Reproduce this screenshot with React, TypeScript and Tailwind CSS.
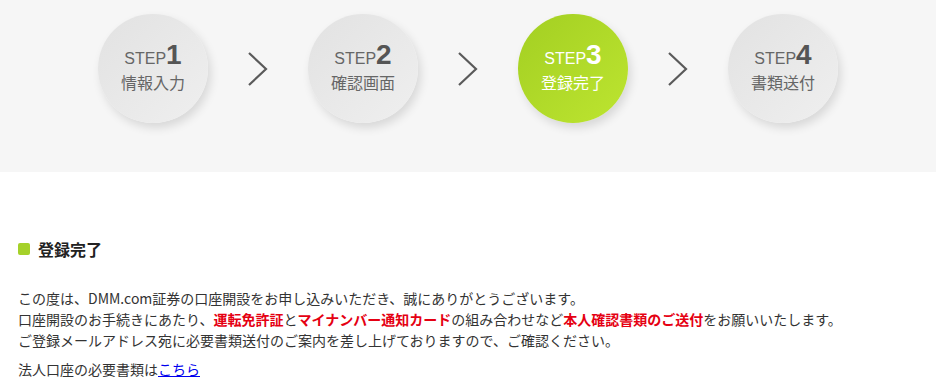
import React from "react";

const steps = [
  { no: 1, label: "情報入力" },
  { no: 2, label: "確認画面" },
  { no: 3, label: "登録完了", active: true },
  { no: 4, label: "書類送付" },
];

function Chevron() {
  return (
    <svg width="20" height="34" viewBox="0 0 20 34" className="mx-[40px] shrink-0">
      <path d="M1 1 L18 17 L1 33" fill="none" stroke="#5a5a5a" strokeWidth="2.2" />
    </svg>
  );
}

function StepCircle({ no, label, active }: { no: number; label: string; active?: boolean }) {
  return (
    <div
      className={
        active
          ? "w-[110px] h-[109px] rounded-full shrink-0 flex flex-col items-center justify-center bg-gradient-to-br from-[#a3cf22] to-[#bde530] text-white shadow-[3px_5px_10px_rgba(0,0,0,0.12)]"
          : "w-[110px] h-[109px] rounded-full shrink-0 flex flex-col items-center justify-center bg-gradient-to-br from-[#e2e2e2] to-[#efefef] text-[#666] shadow-[3px_5px_10px_rgba(0,0,0,0.12)]"
      }
    >
      <div className="flex items-baseline font-['Liberation_Sans',Arial,sans-serif] leading-none -mt-[6px]">
        <span className="text-[16px]">STEP</span>
        <span className={active ? "text-[28px] font-bold" : "text-[28px] font-bold text-[#555]"}>{no}</span>
      </div>
      <div className="text-[16px] leading-none mt-[5px] font-['Noto_Sans_CJK_JP',sans-serif]">{label}</div>
    </div>
  );
}

export default function App() {
  return (
    <div className="w-[936px] h-[392px] overflow-hidden bg-white font-['Noto_Sans_CJK_JP','Liberation_Sans',sans-serif] text-[#333]">
      <div className="h-[172px] bg-[#f6f6f6] flex justify-center items-start pt-[14px]">
        {steps.map((s, i) => (
          <div key={s.no} className="flex items-center">
            <StepCircle no={s.no} label={s.label} active={s.active} />
            {i < steps.length - 1 && <Chevron />}
          </div>
        ))}
      </div>

      <div className="px-[18px]">
        <h2 className="mt-[65px] flex items-center text-[16px] font-bold leading-[24px] text-[#222]">
          <span className="w-[12px] h-[12px] rounded-[2px] bg-[#a5d12a] mr-[8px]" />
          登録完了
        </h2>

        <p className="mt-[27px] text-[14px] leading-[21px]">
          この度は、DMM.com証券の口座開設をお申し込みいただき、誠にありがとうございます。
          <br />
          口座開設のお手続きにあたり、
          <span className="text-[#e50012] font-bold">運転免許証</span>と
          <span className="text-[#e50012] font-bold">マイナンバー通知カード</span>の組み合わせなど
          <span className="text-[#e50012] font-bold">本人確認書類のご送付</span>をお願いいたします。
          <br />
          ご登録メールアドレス宛に必要書類送付のご案内を差し上げておりますので、ご確認ください。
        </p>

        <p className="mt-[8px] text-[14px] leading-[21px]">
          法人口座の必要書類は
          <a href="#" className="text-[#0000ee] underline">こちら</a>
        </p>
      </div>
    </div>
  );
}
